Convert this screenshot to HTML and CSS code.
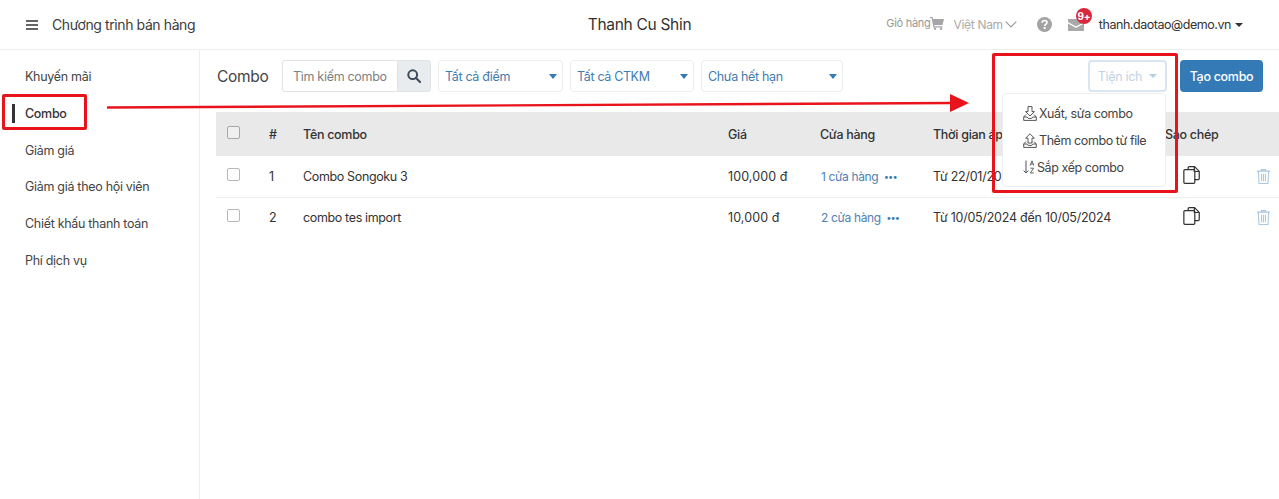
FILE: index.html
```html
<!DOCTYPE html>
<html lang="vi">
<head>
    <meta charset="UTF-8">
    <meta name="viewport" content="width=device-width, initial-scale=1.0">
    <title>Chương trình bán hàng</title>
    <link rel="stylesheet" href="styles.css">
</head>
<body>
    <header class="topbar">
        <div class="topbar-left">
            <svg class="burger" width="12" height="10" viewBox="0 0 12 10"><path d="M0 1h12M0 5h12M0 9h12" stroke="#333" stroke-width="1.6"/></svg>
            <span class="app-title">Chương trình bán hàng</span>
        </div>
        <div class="shop-name">Thanh Cu Shin</div>
        <div class="topbar-right">
            <span class="cart">Giỏ hàng<svg width="14" height="13" viewBox="0 0 14 13"><path d="M0 0h2.5l.5 2h11l-1.5 6H4.2l.3 1.2h8V10.5H3.4L1.6 1.3H0z" fill="#a6a6a6"/><circle cx="5" cy="11.8" r="1.2" fill="#a6a6a6"/><circle cx="11" cy="11.8" r="1.2" fill="#a6a6a6"/></svg></span>
            <span class="lang">Việt Nam<svg width="12" height="7" viewBox="0 0 12 7"><path d="M.7.7 6 6 11.3.7" fill="none" stroke="#999" stroke-width="1.1"/></svg></span>
            <svg class="help" width="15" height="15" viewBox="0 0 15 15"><circle cx="7.5" cy="7.5" r="7.5" fill="#a3a3a3"/><path d="M5.2 5.8c0-3 4.8-3 4.8-.2 0 1.8-2.3 1.7-2.3 3.3" fill="none" stroke="#fff" stroke-width="1.7"/><rect x="6.7" y="10" width="2" height="2" fill="#fff"/></svg>
            <span class="mail">
                <svg width="16" height="12" viewBox="0 0 16 12"><path d="M0 0h16v3L8 7.5 0 3zM0 4.6l8 4.4 8-4.4V12H0z" fill="#a9a9a9"/></svg>
                <span class="badge">9+</span>
            </span>
            <span class="user">thanh.daotao@demo.vn<i class="caret dark"></i></span>
        </div>
    </header>

    <div class="layout">
        <nav class="sidebar">
            <a class="nav-item">Khuyến mãi</a>
            <a class="nav-item active">Combo</a>
            <a class="nav-item">Giảm giá</a>
            <a class="nav-item">Giảm giá theo hội viên</a>
            <a class="nav-item">Chiết khấu thanh toán</a>
            <a class="nav-item">Phí dịch vụ</a>
        </nav>

        <main class="content">
            <div class="toolbar">
                <h1 class="page-title">Combo</h1>
                <div class="search">
                    <span class="search-input">Tìm kiếm combo</span>
                    <span class="search-btn"><svg width="14" height="14" viewBox="0 0 14 14"><circle cx="5.7" cy="5.7" r="4.4" fill="none" stroke="#3d4a57" stroke-width="2"/><path d="M9 9l4 4" stroke="#3d4a57" stroke-width="2.2" stroke-linecap="round"/></svg></span>
                </div>
                <div class="select sel-point">Tất cả điểm<i class="caret blue"></i></div>
                <div class="select sel-ctkm">Tất cả CTKM<i class="caret blue"></i></div>
                <div class="select sel-expiry">Chưa hết hạn<i class="caret blue"></i></div>
                <div class="toolbar-end">
                    <button class="btn-tools">Tiện ích<i class="caret pale"></i></button>
                    <button class="btn-create">Tạo combo</button>
                </div>
            </div>

            <table class="combo-table">
                <colgroup>
                    <col class="c-check"><col class="c-num"><col class="c-name"><col class="c-price"><col class="c-store"><col class="c-time"><col class="c-copy"><col class="c-del">
                </colgroup>
                <thead>
                    <tr>
                        <th><span class="checkbox head"></span></th>
                        <th>#</th>
                        <th>Tên combo</th>
                        <th>Giá</th>
                        <th>Cửa hàng</th>
                        <th>Thời gian áp dụng</th>
                        <th>Sao chép</th>
                        <th></th>
                    </tr>
                </thead>
                <tbody>
                    <tr>
                        <td><span class="checkbox"></span></td>
                        <td>1</td>
                        <td class="name-cell">Combo Songoku 3</td>
                        <td class="price-cell">100,000 đ</td>
                        <td><a class="store-link">1 cửa hàng</a><span class="dots">•••</span></td>
                        <td class="time-cell">Từ 22/01/2024</td>
                        <td class="copy-cell"><svg width="17" height="18" viewBox="0 0 18 19"><path d="M5.5 3.6V1.8Q5.5.7 6.6.7h5.6l5 5v7.6q0 1.1-1.1 1.1h-3.9M12 .9v4.9h5" fill="none" stroke="#333" stroke-width="1.3"/><path d="M2 3.8h9.4q1.1 0 1.1 1.1v12.3q0 1.1-1.1 1.1H2Q.9 18.3.9 17.2V4.9Q.9 3.8 2 3.8z" fill="none" stroke="#333" stroke-width="1.3"/></svg></td>
                        <td class="del-cell"><svg width="13" height="15" viewBox="0 0 12 14"><path d="M0 2h12M4 2V.6h4V2M1.2 2.5l.6 11h8.4l.6-11M4.2 4.5v7M6 4.5v7M7.8 4.5v7" fill="none" stroke="#a9c8e2" stroke-width="1"/></svg></td>
                    </tr>
                    <tr>
                        <td><span class="checkbox"></span></td>
                        <td>2</td>
                        <td class="name-cell">combo tes import</td>
                        <td class="price-cell">10,000 đ</td>
                        <td><a class="store-link">2 cửa hàng</a><span class="dots">•••</span></td>
                        <td class="time-cell">Từ 10/05/2024 đến 10/05/2024</td>
                        <td class="copy-cell"><svg width="17" height="18" viewBox="0 0 18 19"><path d="M5.5 3.6V1.8Q5.5.7 6.6.7h5.6l5 5v7.6q0 1.1-1.1 1.1h-3.9M12 .9v4.9h5" fill="none" stroke="#333" stroke-width="1.3"/><path d="M2 3.8h9.4q1.1 0 1.1 1.1v12.3q0 1.1-1.1 1.1H2Q.9 18.3.9 17.2V4.9Q.9 3.8 2 3.8z" fill="none" stroke="#333" stroke-width="1.3"/></svg></td>
                        <td class="del-cell"><svg width="13" height="15" viewBox="0 0 12 14"><path d="M0 2h12M4 2V.6h4V2M1.2 2.5l.6 11h8.4l.6-11M4.2 4.5v7M6 4.5v7M7.8 4.5v7" fill="none" stroke="#a9c8e2" stroke-width="1"/></svg></td>
                    </tr>
                </tbody>
            </table>
        </main>
    </div>

    <!-- dropdown dang mo -->
    <div class="menu">
        <div class="menu-item"><svg width="14" height="15" viewBox="0 0 14 15"><path d="M5 .6h4v5h2.4L7 10 2.6 5.6H5zM3 8.5 .7 11v3.4h12.6V11L11 8.5M.7 11h3.6l1 1.4h3.4l1-1.4h3.6" fill="none" stroke="#555" stroke-width="1"/></svg>Xuất, sửa combo</div>
        <div class="menu-item"><svg width="14" height="15" viewBox="0 0 14 15"><path d="M5 10V5.2H2.6L7 .8l4.4 4.4H9V10zM3 8.5 .7 11v3.4h12.6V11L11 8.5M.7 11h3.6l1 1.4h3.4l1-1.4h3.6" fill="none" stroke="#555" stroke-width="1"/></svg>Thêm combo từ file</div>
        <div class="menu-item sort"><svg width="12" height="14" viewBox="0 0 12 14"><path d="M3 .5v12.5M.6 10.6 3 13l2.4-2.4" fill="none" stroke="#555" stroke-width="1"/><path d="M7.2 5.6 9 .8l1.8 4.8M7.8 4h2.4M7.4 8.2h3.2L7.4 13h3.4" fill="none" stroke="#555" stroke-width=".9"/></svg>Sắp xếp combo</div>
    </div>

    <!-- chu thich mau do ve de len anh -->
    <div class="mark mark-combo"></div>
    <div class="mark mark-tools"></div>
    <svg class="arrow" width="866" height="20" viewBox="0 0 866 20"><path d="M0 13.5 845 9" stroke="#e8131b" stroke-width="2.4"/><path d="M843 0l19 9-19 9z" fill="#e8131b"/></svg>
</body>
</html>
```

FILE: styles.css
```css
* {
    box-sizing: border-box;
}

body {
    margin: 0;
    height: 499px;
    overflow: hidden;
    font-family: Inter, "Noto Sans", sans-serif;
    font-size: 13px;
    letter-spacing: -0.3px;
    color: #333;
    background-color: #fff;
}

.topbar {
    height: 50px;
    border-bottom: 1px solid #eeeeee;
    display: grid;
    grid-template-columns: 1fr auto 1fr;
    align-items: center;
    padding: 0 36px;
}

.topbar-left {
    display: flex;
    align-items: center;
    gap: 14px;
    margin-left: -10px;
}

.app-title {
    font-size: 14px;
    letter-spacing: -0.4px;
    color: #3d3d3d;
}

.shop-name {
    font-size: 15.5px;
    color: #333;
}

.topbar-right {
    display: flex;
    align-items: center;
    justify-content: flex-end;
}

.cart {
    display: flex;
    align-items: center;
    font-size: 11px;
    color: #999;
    margin-top: -3px;
}

.lang {
    display: flex;
    align-items: center;
    gap: 2px;
    margin-left: 9px;
    font-size: 12px;
    color: #aaa;
}

.help {
    margin-left: 20px;
}

.mail {
    position: relative;
    display: flex;
    margin-left: 16px;
}

.badge {
    position: absolute;
    left: 8px;
    top: -11px;
    width: 16px;
    height: 16px;
    border-radius: 50%;
    background-color: #d9273e;
    color: #fff;
    font-size: 10px;
    font-weight: 700;
    line-height: 16px;
    text-align: center;
}

.user {
    display: flex;
    align-items: center;
    gap: 4px;
    margin-left: 15px;
    font-size: 12.5px;
    letter-spacing: -0.45px;
    color: #333;
}

.caret {
    display: inline-block;
    border-left: 4px solid transparent;
    border-right: 4px solid transparent;
    border-top: 4px solid #333;
}

.caret.blue {
    border-top-color: #337ab7;
    border-left-width: 4.5px;
    border-right-width: 4.5px;
    border-top-width: 5px;
}

.caret.pale {
    border-top-color: #b5cfe5;
    margin-left: 7px;
    margin-bottom: 3px;
}

.layout {
    display: flex;
    height: 449px;
}

.sidebar {
    width: 200px;
    border-right: 1px solid #eeeeee;
    padding-top: 8.5px;
}

.nav-item {
    display: flex;
    align-items: center;
    height: 36.7px;
    padding-left: 25px;
    font-size: 12.5px;
    color: #444;
    position: relative;
}

.nav-item.active {
    font-weight: 500;
    color: #333;
    padding-bottom: 1px;
}

.nav-item.active::before {
    content: "";
    position: absolute;
    left: 12px;
    top: 9px;
    width: 3px;
    height: 19px;
    background-color: #333;
}

.content {
    flex: 1;
    min-width: 0;
    padding: 10px 0 0 16px;
}

.toolbar {
    display: flex;
    align-items: center;
    height: 32px;
    padding-right: 16px;
}

.page-title {
    width: 52px;
    margin: 0 13px 0 1px;
    font-size: 15.5px;
    font-weight: 400;
    color: #444;
}

.search {
    display: flex;
    width: 149px;
    height: 32px;
    margin-right: 7px;
}

.search-input {
    flex: 1;
    display: flex;
    align-items: center;
    padding-left: 10px;
    border: 1px solid #e3e3e3;
    border-right: 0;
    border-radius: 3px 0 0 3px;
    font-size: 12.5px;
    color: #808080;
    white-space: nowrap;
}

.search-btn {
    width: 34px;
    display: flex;
    align-items: center;
    justify-content: center;
    background-color: #e9ecef;
    border: 1px solid #e3e3e3;
    border-radius: 0 3px 3px 0;
}

.select {
    display: flex;
    align-items: center;
    justify-content: space-between;
    height: 32px;
    padding: 0 5px 0 6px;
    margin-right: 7px;
    border: 1px solid #eeeeee;
    border-radius: 4px;
    font-size: 12.5px;
    letter-spacing: -0.35px;
    color: #3f7cb0;
}

.sel-point {
    width: 125px;
}

.sel-ctkm {
    width: 124px;
}

.sel-expiry {
    width: 142px;
}

.toolbar-end {
    margin-left: auto;
    display: flex;
    gap: 13px;
}

.btn-tools {
    width: 79px;
    height: 32px;
    border: 2px solid #d8e6f3;
    border-radius: 4px;
    background-color: #fff;
    font-family: inherit;
    font-size: 12.5px;
    letter-spacing: inherit;
    color: #bfd3e6;
    padding: 0;
}

.btn-create {
    width: 83px;
    height: 32px;
    border: 0;
    border-radius: 4px;
    background-color: #337ab7;
    font-family: inherit;
    font-size: 12.5px;
    letter-spacing: inherit;
    font-weight: 500;
    color: #fff;
    padding: 0;
}

.combo-table {
    margin-top: 20px;
    width: 1063px;
    table-layout: fixed;
    border-collapse: collapse;
}

.c-check { width: 42px; }
.c-num { width: 34px; }
.c-name { width: 425px; }
.c-price { width: 92px; }
.c-store { width: 113px; }
.c-time { width: 232px; }
.c-copy { width: 92px; }
.c-del { width: 33px; }

.combo-table th {
    height: 44px;
    padding: 0 0 0 11px;
    background-color: #e9e9e9;
    text-align: left;
    font-size: 12.5px;
    font-weight: 500;
    color: #333;
    white-space: nowrap;
    overflow: hidden;
}

.combo-table td {
    height: 41px;
    padding: 0 0 0 11px;
    border-bottom: 1px solid #eeeeee;
    font-size: 12.5px;
    color: #333;
    white-space: nowrap;
}

.combo-table tr:last-child td {
    border-bottom: 0;
    padding-bottom: 1px;
}

.combo-table .name-cell {
    letter-spacing: -0.36px;
}

.combo-table .price-cell {
    letter-spacing: 0.1px;
}

.combo-table .time-cell {
    letter-spacing: -0.24px;
}

.checkbox {
    display: block;
    width: 13px;
    height: 13px;
    margin-top: -4px;
    border: 1px solid #b8b8b8;
    border-radius: 2px;
    background-color: #fff;
}

.checkbox.head {
    background-color: #efefef;
    border-color: #a8a8a8;
}

.store-link {
    font-size: 12px;
    letter-spacing: -0.36px;
    margin-left: 1px;
    color: #4f81b3;
}

.dots {
    margin-left: 6px;
    font-size: 9px;
    font-weight: 700;
    letter-spacing: 0;
    color: #337ab7;
    vertical-align: 1px;
}

.copy-cell svg {
    display: block;
    margin-left: 18px;
    margin-top: -2px;
}

.del-cell svg {
    display: block;
}

.menu {
    position: absolute;
    left: 1002px;
    top: 93px;
    width: 164px;
    height: 94px;
    padding-top: 6.5px;
    background-color: #fff;
    border: 1px solid #eeeeee;
    border-radius: 4px;
}

.menu-item {
    display: flex;
    align-items: center;
    gap: 2px;
    height: 26.7px;
    padding-left: 20px;
    font-size: 12.5px;
    letter-spacing: -0.42px;
    color: #444;
}

.mark {
    position: absolute;
    border: 3px solid #e8131b;
    border-radius: 2px;
}

.mark-combo {
    left: 2px;
    top: 94px;
    width: 85px;
    height: 36px;
}

.mark-tools {
    left: 992px;
    top: 53px;
    width: 186px;
    height: 140px;
}

.arrow {
    position: absolute;
    left: 107px;
    top: 94px;
}
```
